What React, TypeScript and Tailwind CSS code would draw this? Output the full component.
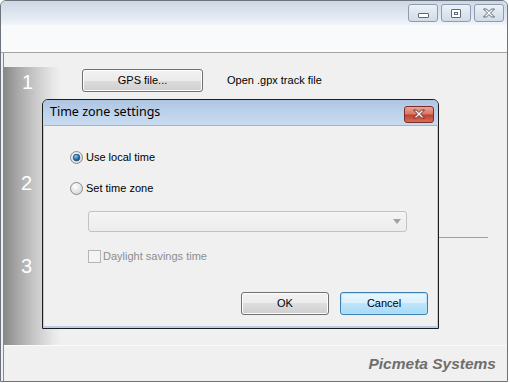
const sans = { fontFamily: '"Liberation Sans", Arial, sans-serif' };

const CaptionButton = ({ kind }: { kind: 'min' | 'max' | 'close' }) => (
    <div className="w-[30px] h-[18px] rounded-[3px] border border-[#8d9bb0] bg-[linear-gradient(#eef2f7,#dde5ee_50%,#d2dce7)] flex items-center justify-center">
        {kind === 'min' && (
            <div className="w-[11px] h-[5px] mt-[5px] rounded-[1px] border border-[#5c6677] bg-white" />
        )}
        {kind === 'max' && (
            <div className="w-[10px] h-[9px] rounded-[1px] border border-[#5c6677] bg-white flex items-center justify-center">
                <div className="w-[4px] h-[3px] border border-[#5c6677]" />
            </div>
        )}
        {kind === 'close' && (
            <svg width="14" height="10" viewBox="0 0 14 10">
                <path d="M1.5 1 L4.5 1 L7 3.5 L9.5 1 L12.5 1 L8.5 5 L12.5 9 L9.5 9 L7 6.5 L4.5 9 L1.5 9 L5.5 5 Z" fill="#fff" stroke="#5c6677" strokeWidth="1" strokeLinejoin="round" />
            </svg>
        )}
    </div>
);

const WinButton = ({ label, className, focused }: { label: string; className?: string; focused?: boolean }) => (
    <div
        className={
            'h-[23px] rounded-[3px] border flex items-center justify-center text-[11px] text-black ' +
            (focused
                ? 'border-[#3c7fb1] bg-[linear-gradient(#eaf6fd,#d9f0fc_50%,#bee6fd_50%,#a7d9f5)] shadow-[inset_0_0_0_1px_#b9e3f9] '
                : 'border-[#707070] bg-[linear-gradient(#f2f2f2,#ebebeb_50%,#dddddd_50%,#cfcfcf)] shadow-[inset_0_0_0_1px_#fcfcfc] ') +
            (className ?? '')
        }
        style={sans}
    >
        {label}
    </div>
);

const Radio = ({ checked }: { checked?: boolean }) => (
    <svg width="13" height="13" viewBox="0 0 13 13">
        <defs>
            <radialGradient id="rbg" cx="0.4" cy="0.35" r="0.7">
                <stop offset="0" stopColor="#ffffff" />
                <stop offset="1" stopColor="#d4d4d4" />
            </radialGradient>
            <radialGradient id="rdot" cx="0.4" cy="0.35" r="0.7">
                <stop offset="0" stopColor="#8fd1f5" />
                <stop offset="0.5" stopColor="#2e7fb4" />
                <stop offset="1" stopColor="#0f3f66" />
            </radialGradient>
        </defs>
        <circle cx="6.5" cy="6.5" r="6" fill="url(#rbg)" stroke="#8c8c8c" />
        {checked && <circle cx="6.5" cy="6.5" r="3.4" fill="url(#rdot)" stroke="#234d6e" strokeWidth="0.6" />}
    </svg>
);

const TimeZoneDialog = () => (
    <div className="absolute left-[42px] top-[99px] w-[397px] h-[230px] border border-[#1c1c1c] rounded-t-[6px] bg-[#b8cde6] flex flex-col overflow-hidden">
        {/* Title bar */}
        <div className="h-[25px] shrink-0 bg-[linear-gradient(#aec5e1,#c0d4ec_60%,#c8daef)] flex items-center justify-between pl-[7px] pr-[4px]">
            <span className="text-[12.5px] text-black" style={{ fontFamily: '"Noto Sans", "Open Sans", sans-serif' }}>
                Time zone settings
            </span>
            <div className="w-[30px] h-[17px] mt-[3px] rounded-[3px] border border-[#7a2f26] bg-[linear-gradient(#eba495,#d8796a_45%,#c2402f_55%,#d1705c)] flex items-center justify-center">
                <svg width="14" height="10" viewBox="0 0 14 10">
                    <path d="M1.5 1 L4.5 1 L7 3.5 L9.5 1 L12.5 1 L8.5 5 L12.5 9 L9.5 9 L7 6.5 L4.5 9 L1.5 9 L5.5 5 Z" fill="#fff" stroke="#6e2a22" strokeWidth="1" strokeLinejoin="round" />
                </svg>
            </div>
        </div>

        {/* Body */}
        <div className="flex-1 bg-[#f0f0f0] mx-[1px] mb-[2px] border-t border-[#9fb5d1] flex flex-col pl-[26px] pt-[24px]" style={sans}>
            <div className="flex items-center gap-[3px] h-[14px] text-[11px] text-black">
                <Radio checked />
                <span>Use local time</span>
            </div>
            <div className="flex items-center gap-[3px] h-[14px] mt-[17px] text-[11px] text-black">
                <Radio />
                <span>Set time zone</span>
            </div>
            <div className="ml-[18px] mt-[16px] w-[319px] h-[21px] rounded-[3px] border border-[#c3c3c3] bg-[linear-gradient(#f5f5f5,#ececec)] flex items-center justify-end pr-[5px]">
                <svg width="8" height="5" viewBox="0 0 8 5">
                    <path d="M0 0 L8 0 L4 5 Z" fill="#a2a2a2" />
                </svg>
            </div>
            <div className="ml-[18px] mt-[17px] flex items-center gap-[2px] h-[14px] text-[11px] text-[#8d8d8d]">
                <div className="w-[13px] h-[13px] border border-[#b5b5b5] bg-[#f4f4f4]" />
                <span>Daylight savings time</span>
            </div>
            <div className="mt-[29px] flex justify-end gap-[11px] pr-[9px]">
                <WinButton label="OK" className="w-[88px]" />
                <WinButton label="Cancel" className="w-[88px]" focused />
            </div>
        </div>
    </div>
);

const StepNumber = ({ n, className }: { n: string; className?: string }) => (
    <span className={'text-[20px] text-white leading-none ' + (className ?? '')} style={sans}>
        {n}
    </span>
);

export default function App() {
    return (
        <div className="w-[510px] h-[383px] relative overflow-hidden bg-white">
            <div className="w-[508px] h-[382px] border border-[#6d737d] rounded-t-[6px] flex flex-col overflow-hidden bg-[#f0f0f0]">
                {/* Caption */}
                <div className="h-[24px] shrink-0 bg-[linear-gradient(#cdd8e5,#e3eaf2_70%,#f2f5f9)] flex justify-end items-start gap-[3px] pt-[3px] pr-[3px]">
                    <CaptionButton kind="min" />
                    <CaptionButton kind="max" />
                    <CaptionButton kind="close" />
                </div>

                {/* Top strip */}
                <div className="h-[28px] shrink-0 bg-[linear-gradient(#f7f9fb,#fbfbfb)] border-b border-[#a3a3a3]" />

                {/* Client */}
                <div className="flex-1 flex flex-col ml-[2px] border-l border-[#8a8a8a]">
                    <div className="flex-1 flex pt-[14px]">
                        {/* Step gradient column */}
                        <div className="w-[57px] shrink-0 bg-[linear-gradient(to_right,#888888,#a9a9a9_25%,#c9c9c9_55%,#e6e6e6_85%,#f0f0f0)] flex flex-col items-start pl-[17px]">
                            <StepNumber n="1" className="mt-[5px] ml-[1px]" />
                            <StepNumber n="2" className="mt-[81px]" />
                            <StepNumber n="3" className="mt-[63px]" />
                        </div>

                        {/* Steps content */}
                        <div className="flex-1 flex flex-col pl-[21px] pr-[19px]">
                            <div className="flex items-center mt-[2px]">
                                <WinButton label="GPS file..." className="w-[121px]" />
                                <span className="ml-[24px] text-[11px] text-black" style={sans}>
                                    Open .gpx track file
                                </span>
                            </div>
                            <div className="mt-[145px] border-b border-[#a0a0a0]" />
                        </div>
                    </div>

                    {/* Footer */}
                    <div className="h-[36px] shrink-0 border-t border-[#fbfbfb] flex items-center justify-end pr-[11px]">
                        <span className="text-[15.5px] font-bold italic text-[#6e6e6e]" style={sans}>
                            Picmeta Systems
                        </span>
                    </div>
                </div>
            </div>

            <TimeZoneDialog />
        </div>
    );
}
